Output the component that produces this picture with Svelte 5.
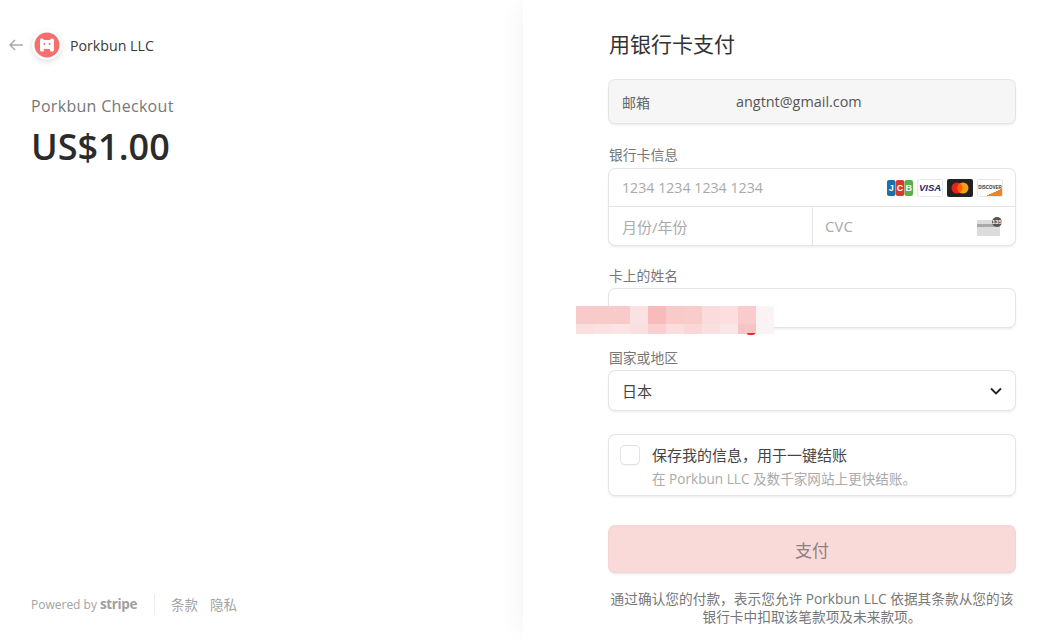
<script lang="ts">
	const topCells = ['#f9caca', '#f9caca', '#f9caca', '#fbe2e2', '#f8baba', '#f9caca', '#f9cccc', '#fbdcdc', '#fbdedd', '#f9cbcd', '#fbf3f3'];
	const lowCells = ['#fbdfdf', '#fbe2e2', '#fae4e4', '#fbe0e0', '#f9cfcf', '#fadede', '#fad6d6', '#fbe0e0', '#fbe6e6', '#f9c4c6', '#f9f3f3'];
</script>

<div class="page">
	<aside class="side">
		<header class="head">
			<svg class="back" viewBox="0 0 14 12" width="14" height="12" aria-hidden="true">
				<path d="M6 1L1 6l5 5M1 6h13" fill="none" stroke="#aaa" stroke-width="1.5" />
			</svg>
			<span class="logo">
				<svg viewBox="0 0 26 26" width="26" height="26" aria-hidden="true">
					<circle cx="13" cy="13" r="12.500" fill="#f56f6f" />
					<path d="M6 8.500c0-1.700 1.700-2.400 3-1.500l1.200 1h5.600l1.200-1c1.300-.9 3-.2 3 1.500v9.500c0 1-.8 1.600-1.600 1.600h-2.200v-2.600h-6.400v2.600H7.600c-.8 0-1.600-.6-1.600-1.600z" fill="#fff" />
					<circle cx="10.400" cy="12" r="1" fill="#f56f6f" />
					<circle cx="15.600" cy="12" r="1" fill="#f56f6f" />
				</svg>
			</span>
			<span class="merchant">Porkbun LLC</span>
		</header>

		<div class="summary">
			<div class="product">Porkbun Checkout</div>
			<div class="amount">US$1.00</div>
		</div>

		<footer class="foot">
			<span class="powered">Powered by <b>stripe</b></span>
			<span class="foot-links"><span>条款</span><span>隐私</span></span>
		</footer>
	</aside>

	<main class="pay">
		<h1>用银行卡支付</h1>

		<div class="box email">
			<span class="email-label">邮箱</span>
			<span class="email-value">angtnt@gmail.com</span>
		</div>

		<div class="label card-label">银行卡信息</div>
		<div class="box card">
			<div class="card-row">
				<span class="ph num">1234 1234 1234 1234</span>
				<span class="brands">
					<svg viewBox="0 0 26 18" width="26" height="18" aria-hidden="true">
						<rect x="0" y="1" width="8.500" height="16" rx="2" fill="#1a6fb0" />
						<rect x="8.800" y="1" width="8.500" height="16" rx="2" fill="#d8392b" />
						<rect x="17.500" y="1" width="8.500" height="16" rx="2" fill="#58b04a" />
						<text x="4.200" y="12" class="jcb">J</text>
						<text x="13" y="12" class="jcb">C</text>
						<text x="21.800" y="12" class="jcb">B</text>
					</svg>
					<span class="mark visa">VISA</span>
					<svg viewBox="0 0 26 18" width="26" height="18" aria-hidden="true">
						<rect x="0" y="0" width="26" height="18" rx="2" fill="#222" />
						<circle cx="10" cy="9" r="5.500" fill="#e8231a" />
						<circle cx="16" cy="9" r="5.500" fill="#f79e1b" />
						<path d="M13 4.400a5.500 5.500 0 0 1 0 9.200 5.500 5.500 0 0 1 0-9.200z" fill="#ff5f00" />
					</svg>
					<span class="mark discover">DISCOVER</span>
				</span>
			</div>
			<div class="card-row split">
				<span class="cell exp"><span class="ph">月份/年份</span></span>
				<span class="cell cvc">
					<span class="ph">CVC</span>
					<svg viewBox="0 0 26 19" width="26" height="19" aria-hidden="true">
						<rect x="0" y="3" width="23" height="16" rx="1" fill="#dcdcdc" />
						<rect x="0" y="7" width="23" height="3" fill="#a9a9a9" />
						<circle cx="20" cy="5" r="5" fill="#555" />
						<text x="20" y="7" class="cvc-num">135</text>
					</svg>
				</span>
			</div>
		</div>

		<div class="label">卡上的姓名</div>
		<div class="box field"></div>

		<div class="label">国家或地区</div>
		<div class="box field select">
			<span>日本</span>
			<svg viewBox="0 0 12 8" width="12" height="8" aria-hidden="true">
				<path d="M1 1.500l5 5 5-5" fill="none" stroke="#222" stroke-width="1.800" />
			</svg>
		</div>

		<div class="box save">
			<span class="check"></span>
			<div>
				<div class="save-title">保存我的信息，用于一键结账</div>
				<div class="save-sub">在 Porkbun LLC 及数千家网站上更快结账。</div>
			</div>
		</div>

		<button class="submit" type="button">支付</button>

		<p class="terms">通过确认您的付款，表示您允许 Porkbun LLC 依据其条款从您的该银行卡中扣取该笔款项及未来款项。</p>
	</main>

	<div class="mosaic" aria-hidden="true">
		<div class="mosaic-row top">
			{#each topCells as c}<i style="background:{c}"></i>{/each}
		</div>
		<div class="mosaic-row low">
			{#each lowCells as c}<i style="background:{c}"></i>{/each}
		</div>
		<span class="dot"></span>
	</div>
</div>

<style>
	:global(body) {
		margin: 0;
		background: #fff;
		font-family: "Open Sans", "Noto Sans CJK SC", sans-serif;
		color: #333;
		overflow: hidden;
	}
	.page {
		position: relative;
		display: flex;
		width: 1054px;
		height: 638px;
		overflow: hidden;
	}
	.side {
		width: 523px;
		box-sizing: border-box;
		padding: 31px 0 24px 9px;
		display: flex;
		flex-direction: column;
	}
	.head {
		display: flex;
		align-items: center;
		height: 28px;
	}
	.back {
		margin-right: 11px;
	}
	.logo {
		display: flex;
		width: 26px;
		height: 26px;
		border-radius: 50%;
		box-shadow: 0 0 0 2px #fff, 0 2px 6px 1px rgba(0, 0, 0, 0.16);
	}
	.merchant {
		margin-left: 10px;
		font-size: 14.200px;
		font-weight: 500;
		color: #3a3a3a;
	}
	.summary {
		margin: 35px 0 0 22px;
	}
	.product {
		font-size: 16px;
		font-weight: 500;
		line-height: 24px;
		color: #777;
		letter-spacing: 0.3px;
	}
	.amount {
		font-size: 36px;
		font-weight: 600;
		line-height: 44px;
		color: #2b2b2b;
		margin-top: 7px;
	}
	.foot {
		margin: auto 0 0 22px;
		display: flex;
		align-items: center;
		height: 20px;
		font-size: 12px;
		color: #a3a3a3;
	}
	.powered {
		padding-right: 17px;
		border-right: 1px solid #eee;
		line-height: 20px;
	}
	.powered b {
		font-size: 13.500px;
		font-weight: 700;
		letter-spacing: -0.4px;
		color: #a0a0a0;
	}
	.foot-links {
		display: flex;
		gap: 12px;
		margin-left: 16px;
		font-size: 13.500px;
		color: #a3a3a3;
	}

	.pay {
		width: 531px;
		box-sizing: border-box;
		padding: 30px 38px 0 86px;
		box-shadow: -14px 0 18px -6px rgba(0, 0, 0, 0.035);
		background: #fff;
	}
	h1 {
		margin: 0 0 21px;
		font-size: 21px;
		font-weight: 400;
		line-height: 29px;
		color: #333;
	}
	.box {
		box-sizing: border-box;
		width: 406px;
		background: #fff;
		border-radius: 6px;
		box-shadow: 0 0 0 1px #e4e4e4, 0 2px 3px rgba(0, 0, 0, 0.09);
	}
	.email {
		display: flex;
		align-items: center;
		height: 43px;
		padding: 0 13px;
		background: #f6f6f6;
	}
	.email-label {
		width: 114px;
		font-size: 14px;
		color: #666;
	}
	.email-value {
		font-size: 14.400px;
		color: #555;
	}
	.label {
		font-size: 13.800px;
		line-height: 18px;
		color: #777;
		margin: 22px 0 4px;
	}
	.card-label {
		margin: 23px 0 5px;
	}
	.card-row {
		display: flex;
		align-items: center;
		justify-content: space-between;
		height: 37px;
		padding: 0 12px 0 13px;
	}
	.card-row.split {
		height: 38px;
		padding: 0;
		border-top: 1px solid #e4e4e4;
	}
	.ph {
		font-size: 15px;
		color: #aaa;
	}
	.ph.num {
		font-size: 14.200px;
	}
	.brands {
		display: flex;
		align-items: center;
		gap: 4px;
	}
	.mark {
		box-sizing: border-box;
		display: flex;
		align-items: center;
		justify-content: center;
		width: 26px;
		height: 18px;
		border: 1px solid #e8e8e8;
		border-radius: 2px;
		font-family: "Liberation Sans", sans-serif;
		font-weight: 700;
	}
	.visa {
		font-size: 9.500px;
		font-style: italic;
		color: #1a2a6c;
	}
	.discover {
		font-size: 4.500px;
		color: #333;
		overflow: hidden;
		background: linear-gradient(155deg, #fff 72%, #f0841e 73%);
	}
	.jcb {
		font-family: "Liberation Sans", sans-serif;
		font-size: 9px;
		font-weight: 700;
		fill: #fff;
		text-anchor: middle;
	}
	.cvc-num {
		font-family: "Liberation Sans", sans-serif;
		font-size: 6px;
		font-weight: 700;
		fill: #fff;
		text-anchor: middle;
	}
	.cell {
		box-sizing: border-box;
		display: flex;
		align-items: center;
		justify-content: space-between;
		height: 100%;
		padding: 0 13px;
	}
	.exp {
		width: 203px;
	}
	.cvc {
		flex: 1;
		padding: 0 12px;
		border-left: 1px solid #e4e4e4;
	}
	.field {
		height: 38px;
	}
	.select {
		display: flex;
		align-items: center;
		justify-content: space-between;
		height: 39px;
		padding: 0 13px;
		font-size: 15px;
		color: #444;
	}
	.save {
		display: flex;
		align-items: flex-start;
		gap: 13px;
		height: 60px;
		margin-top: 25px;
		padding: 10px 12px;
	}
	.check {
		flex: none;
		width: 18px;
		height: 18px;
		border-radius: 4px;
		box-shadow: 0 0 0 1px #e2e2e2, 0 1px 2px rgba(0, 0, 0, 0.1);
		margin-top: 1px;
	}
	.save-title {
		font-size: 15px;
		line-height: 20px;
		color: #444;
	}
	.save-sub {
		font-size: 13.600px;
		line-height: 18px;
		margin-top: 5px;
		color: #aaa;
	}
	.submit {
		display: block;
		width: 406px;
		height: 46px;
		margin-top: 31px;
		border: 0;
		border-radius: 6px;
		background: #f9dad9;
		box-shadow: 0 0 0 1px #f2d5d4, 0 2px 3px rgba(0, 0, 0, 0.1);
		font-family: inherit;
		font-size: 17px;
		color: #8f8080;
	}
	.terms {
		width: 406px;
		margin: 18px 0 0;
		font-size: 13.700px;
		line-height: 18px;
		text-align: center;
		color: #777;
	}

	.mosaic {
		position: absolute;
		left: 576px;
		top: 306px;
	}
	.mosaic-row {
		display: flex;
	}
	.mosaic-row i {
		display: block;
		width: 18px;
	}
	.top i {
		height: 18px;
	}
	.low i {
		height: 10px;
	}
	.dot {
		position: absolute;
		left: 171px;
		top: 27px;
		width: 8px;
		height: 2px;
		border-radius: 0 0 5px 5px;
		background: #ee2a2a;
	}
</style>
